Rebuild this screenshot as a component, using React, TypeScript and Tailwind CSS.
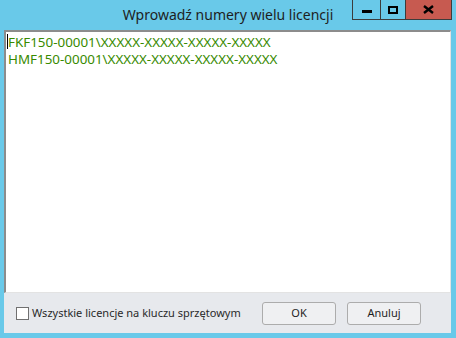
import { useState } from 'react';

export default function App() {
  const [allOnKey, setAllOnKey] = useState(false);

  return (
    <div className="w-[456px] h-[338px] bg-[#69c9e9] flex flex-col font-['Noto_Sans',sans-serif]">
      {/* Title bar */}
      <div className="relative h-[30px] flex items-center justify-center">
        <span className="text-[14px] text-[#1e1e1e] leading-none -mt-[1px]">
          Wprowadź numery wielu licencji
        </span>
        <div className="absolute top-0 right-[4px] flex h-[20px] border border-t-0 border-[#3c3c3c]">
          <button className="w-[28px] h-full flex items-center justify-center border-r border-[#3c3c3c]">
            <span className="block w-[10px] h-[3px] bg-black mt-[3px]" />
          </button>
          <button className="w-[25px] h-full flex items-center justify-center border-r border-[#3c3c3c]">
            <span className="block w-[10px] h-[8px] border-2 border-black" />
          </button>
          <button className="w-[45px] h-full flex items-center justify-center bg-[#c75a50]">
            <svg width="11" height="9" viewBox="0 0 11 9">
              <path d="M1 1 L10 8 M10 1 L1 8" stroke="#000" strokeWidth="2.4" />
            </svg>
          </button>
        </div>
      </div>

      {/* Client area */}
      <div className="flex-1 ml-[4px] mr-[5px] mb-[5px] bg-[#e7e9ed] flex flex-col">
        <div className="h-[263px] bg-white border-t-2 border-l-2 border-t-[#8c8c8c] border-l-[#8c8c8c] border-b border-r border-b-[#e3e3e3] border-r-[#e3e3e3] px-[2px] pt-[2px] text-[13.4px] leading-[17px] text-[#388a00]">
          <div className="relative">
            <span className="absolute -left-[1px] top-[0px] w-[1px] h-[15px] bg-black" />
            FKF150-00001\XXXXX-XXXXX-XXXXX-XXXXX
          </div>
          <div>HMF150-00001\XXXXX-XXXXX-XXXXX-XXXXX</div>
        </div>

        <div className="flex-1 flex items-center pl-[12px] pr-[30px]">
          <label className="flex items-center gap-[3px] cursor-pointer">
            <input
              type="checkbox"
              checked={allOnKey}
              onChange={(e) => setAllOnKey(e.target.checked)}
              className="appearance-none w-[13px] h-[13px] border border-[#707070] bg-white"
            />
            <span className="text-[11px] text-[#2a2a2a]">
              Wszystkie licencje na kluczu sprzętowym
            </span>
          </label>
          <div className="ml-auto flex gap-[11px]">
            <button className="w-[74px] h-[23px] rounded-[3px] border border-[#acacac] bg-[#eff0f2] text-[11px] text-[#1e1e1e]">
              OK
            </button>
            <button className="w-[74px] h-[23px] rounded-[3px] border border-[#acacac] bg-[#eff0f2] text-[11px] text-[#1e1e1e]">
              Anuluj
            </button>
          </div>
        </div>
      </div>
    </div>
  );
}
